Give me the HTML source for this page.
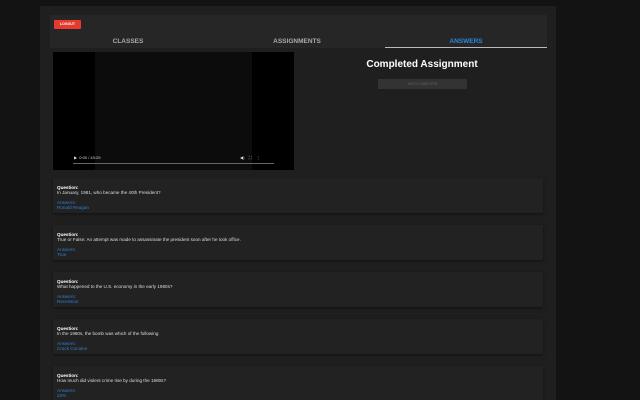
<!DOCTYPE html>
<html><head><meta charset="utf-8"><style>
*{margin:0;padding:0;box-sizing:border-box}
html,body{width:640px;height:400px;overflow:hidden}
body{background:#131313;font-family:"Liberation Sans",sans-serif;position:relative}
.abs{position:absolute}
#cont{left:40px;top:6px;width:516px;height:394px;background:#1f1f1f}
#hdr{left:50px;top:15px;width:497px;height:33px;background:#262626}
#logout{left:54px;top:20px;width:27px;height:9px;background:#e53a2e;color:#fff;font-size:3.5px;font-weight:bold;text-align:center;line-height:9px;border-radius:1px}
.tab{top:38px;font-size:6.5px;font-weight:bold;color:#aaa;text-align:center;width:160px}
#ul{left:385px;top:47px;width:162px;height:1px;background:#bbb}
#vid{left:53px;top:52px;width:241px;height:118px;background:#000}
#vin{left:95px;top:52px;width:157px;height:118px;background:#0c0c0c}
.card{left:53px;width:490px;height:35px;background:#222;box-shadow:0 1px 3px rgba(0,0,0,.5)}
.card p{position:absolute;left:4px;font-size:4.6px;line-height:5px;white-space:nowrap}
.q1{top:7px;color:#fff;font-weight:bold}.q2{top:12px;color:#ddd}
.a1{top:22px;color:#2e7fd0}.a2{top:27px;color:#2e7fd0}
</style></head><body>
<div class="abs" id="cont"></div>
<div class="abs" id="hdr"></div>
<div class="abs" id="logout">LOGOUT</div>
<div class="abs tab" style="left:48px">CLASSES</div>
<div class="abs tab" style="left:217px">ASSIGNMENTS</div>
<div class="abs tab" style="left:386px;color:#2e86de">ANSWERS</div>
<div class="abs" id="ul"></div>
<div class="abs" id="vid"></div>
<div class="abs" id="vin"></div>
<div class="abs" style="left:74px;top:155px;color:#ddd;font-size:4px">▶&nbsp;&nbsp;0:00 / 43:29</div>
<div class="abs" style="left:240px;top:155px;color:#ddd;font-size:4px">◀)&nbsp;&nbsp;&nbsp;&nbsp;⛶&nbsp;&nbsp;&nbsp;&nbsp;⋮</div>
<div class="abs" style="left:73px;top:163px;width:201px;height:1px;background:#666"></div>
<div class="abs" style="left:322px;top:59px;width:200px;text-align:center;color:#fff;font-weight:bold;font-size:10px">Completed Assignment</div>
<div class="abs" style="left:378px;top:79px;width:89px;height:10px;background:#333;color:#555;font-size:3.5px;text-align:center;line-height:10px;font-weight:bold">AUTO COMPLETE</div>
<div class="abs card" style="top:178px"><p class="q1">Question:</p><p class="q2">In January, 1981, who became the 40th President?</p><p class="a1">Answers:</p><p class="a2">Ronald Reagan</p></div>
<div class="abs card" style="top:225px"><p class="q1">Question:</p><p class="q2">True or False: An attempt was made to assassinate the president soon after he took office.</p><p class="a1">Answers:</p><p class="a2">True</p></div>
<div class="abs card" style="top:272px"><p class="q1">Question:</p><p class="q2">What happened to the U.S. economy in the early 1980s?</p><p class="a1">Answers:</p><p class="a2">Recession</p></div>
<div class="abs card" style="top:319px"><p class="q1">Question:</p><p class="q2">In the 1980s, the bomb was which of the following</p><p class="a1">Answers:</p><p class="a2">Crack Cocaine</p></div>
<div class="abs card" style="top:366px"><p class="q1">Question:</p><p class="q2">How much did violent crime rise by during the 1980s?</p><p class="a1">Answers:</p><p class="a2">23%</p></div>
</body></html>
